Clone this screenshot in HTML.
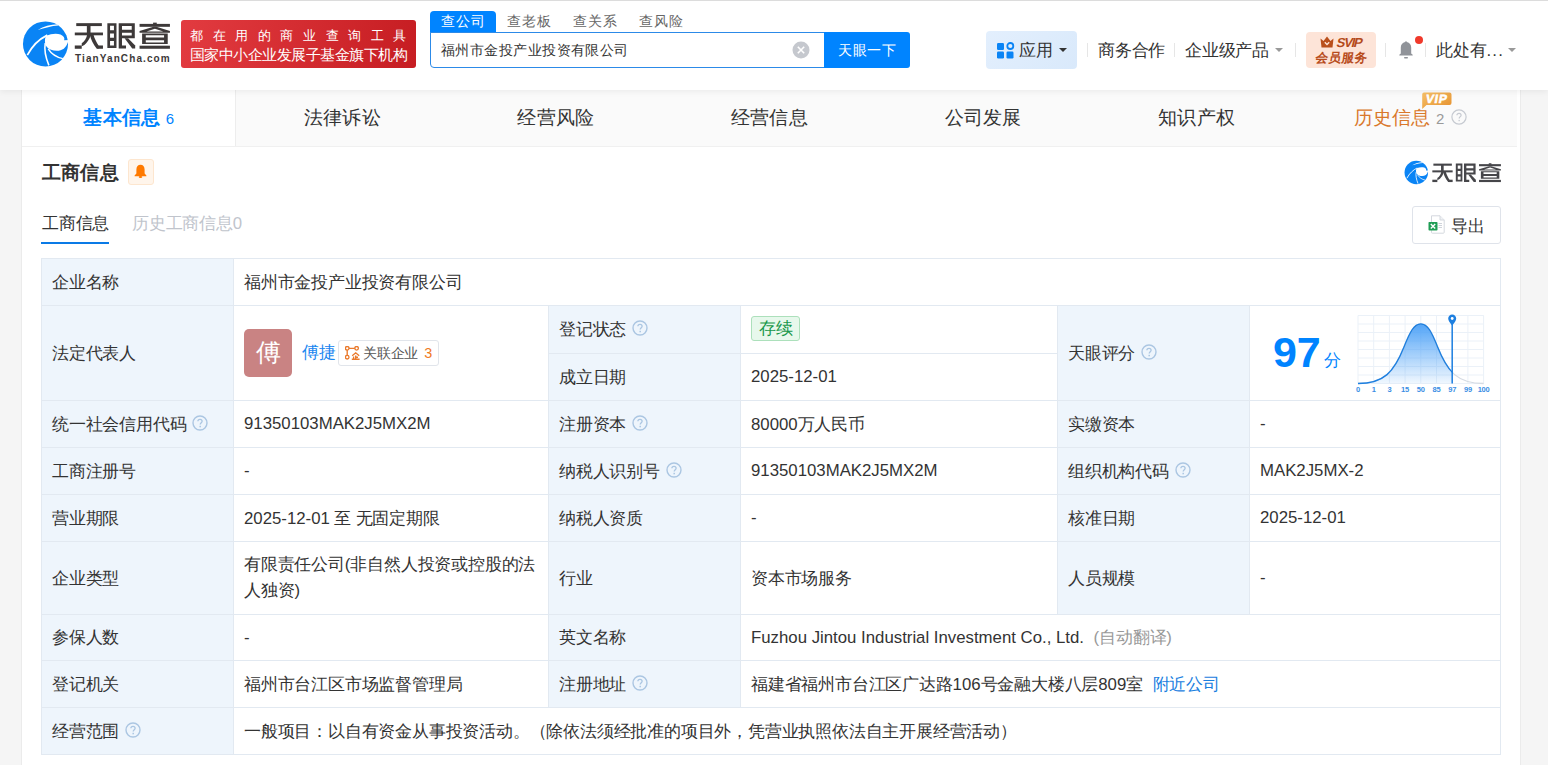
<!DOCTYPE html>
<html><head><meta charset="utf-8">
<style>
*{margin:0;padding:0;box-sizing:border-box;}
html,body{width:1548px;height:765px;overflow:hidden;background:#f5f5f5;font-family:"Liberation Sans",sans-serif;color:#333;}
.a{position:absolute;white-space:nowrap;}
#hdr{position:absolute;left:0;top:0;width:1548px;height:90px;background:#fff;box-shadow:0 2px 6px rgba(0,0,0,0.06);z-index:5;}
#card{position:absolute;left:21px;top:90px;width:1500px;height:700px;background:#fff;border:1px solid #ebebeb;border-top:none;}
.tab{position:absolute;top:90px;height:56px;font-size:19.2px;letter-spacing:0.2px;line-height:56px;text-align:center;color:#333;white-space:nowrap;}
.cell{position:absolute;border:1px solid #e2e9f1;background:#fff;display:flex;align-items:center;padding-left:10px;font-size:16.8px;color:#333;white-space:nowrap;letter-spacing:-0.2px;}
.l{letter-spacing:0;}
.cell.lab{background:#eef5fc;}
.tag{display:inline-block;position:relative;top:-1px;border:1px solid #ace0bb;background:#e7f8ec;color:#18974a;border-radius:3px;padding:0 6.5px 0 7px;line-height:23px;}
.lnk{color:#1a80e0;margin-left:9.5px;}
.wrap{white-space:normal;width:300px;line-height:26px;}
.q{display:inline-block;width:16px;height:16px;vertical-align:-1px;margin-left:6px;}
.sep{position:absolute;top:43px;width:1px;height:14px;background:#e6e6e6;}
.caret{position:absolute;width:0;height:0;border-left:4px solid transparent;border-right:4px solid transparent;border-top:4px solid #333;}
</style></head><body>

<div id="hdr">
  <div class="a" style="left:0;top:0;width:1548px;height:1px;background:#dcdcdc;"></div>
  <svg class="a" style="left:20px;top:18px" width="50" height="50" viewBox="0 0 765 765">
    <circle cx="390" cy="397" r="345" fill="#0a84f5"/>
    <path d="M272,182 C360,126 470,98 575,96 L585,114 C480,122 380,150 272,182 Z" fill="#fff"/>
    <path d="M405,272 C470,240 560,232 620,252 C668,272 688,305 676,340 L760,336 L760,350 L734,366 C708,455 645,502 565,502 C495,502 445,477 415,447 C388,417 378,372 382,332 C386,302 393,286 405,272 Z" fill="#fff"/>
    <path d="M418,262 C300,320 190,420 112,568" stroke="#fff" stroke-width="26" fill="none"/>
    <path d="M386,385 C370,480 390,600 442,725" stroke="#fff" stroke-width="24" fill="none"/>
    <path d="M432,472 C480,550 560,600 655,622" stroke="#fff" stroke-width="22" fill="none"/>
  </svg>
  <svg class="a" style="left:66px;top:14px" width="110" height="56" viewBox="0 0 1503 765" fill="#3d3939">
    <rect x="140" y="125" width="350" height="40"/>
    <rect x="120" y="253" width="385" height="38"/>
    <rect x="285" y="150" width="50" height="120"/>
    <path d="M290,280 L340,280 C320,360 260,430 215,440 L215,400 C250,380 280,330 290,280 Z"/>
    <path d="M325,280 L375,280 C390,340 420,390 445,432 L445,475 L420,475 C370,410 340,350 325,280 Z"/>
    <rect x="120" y="430" width="95" height="45"/>
    <rect x="430" y="430" width="75" height="45"/>
    <path fill-rule="evenodd" d="M565,125 H690 V465 H565 Z M602,162 H655 V222 H602 Z M602,265 H655 V325 H602 Z M602,370 H655 V430 H602 Z"/>
    <path fill-rule="evenodd" d="M720,125 H940 V330 H765 V430 H820 V472 H720 Z M765,165 H898 V215 H765 Z M765,255 H898 V292 H765 Z"/>
    <path d="M800,330 L848,330 L945,432 L945,472 L905,472 Z"/>
    <rect x="1005" y="135" width="415" height="40"/>
    <rect x="1190" y="118" width="50" height="30"/>
    <path d="M1195,175 L1235,175 L1420,232 L1420,255 L1005,255 L1005,232 Z M1215,200 L1100,238 L1330,238 Z" fill-rule="evenodd"/>
    <path fill-rule="evenodd" d="M1040,268 H1390 V410 H1040 Z M1090,290 H1340 V322 H1090 Z M1090,358 H1340 V388 H1090 Z"/>
    <rect x="1005" y="433" width="415" height="42"/>
  </svg>
  <div class="a" style="left:75px;top:53px;font-size:10px;font-weight:bold;color:#3d3939;letter-spacing:1.1px;">TianYanCha.com</div>
  <div class="a" style="left:181px;top:20px;width:235px;height:48px;border-radius:3px;background:linear-gradient(100deg,#e23b40,#c61d22);"></div>
  <div class="a" style="left:190px;top:26.5px;font-size:13px;color:#fff;letter-spacing:9.6px;font-weight:500;">都在用的商业查询工具</div>
  <div class="a" style="left:190px;top:46px;font-size:14.6px;letter-spacing:-0.53px;color:#fff;">国家中小企业发展子基金旗下机构</div>

  <div class="a" style="left:430px;top:11px;width:66px;height:22px;background:#0084ff;border-radius:4px 4px 0 0;"></div>
  <div class="a" style="left:441px;top:12.5px;font-size:13.6px;letter-spacing:0.8px;color:#fff;">查公司</div>
  <div class="a" style="left:507px;top:12.5px;font-size:13.6px;letter-spacing:0.8px;color:#666;">查老板</div>
  <div class="a" style="left:573px;top:12.5px;font-size:13.6px;letter-spacing:0.8px;color:#666;">查关系</div>
  <div class="a" style="left:639px;top:12.5px;font-size:13.6px;letter-spacing:0.8px;color:#666;">查风险</div>
  <div class="a" style="left:430px;top:32px;width:396px;height:36px;border:1px solid #2c8ae8;border-radius:0 0 0 4px;background:#fff;"></div>
  <div class="a" style="left:441px;top:42px;font-size:13.6px;letter-spacing:0.45px;color:#333;">福州市金投产业投资有限公司</div>
  <svg class="a" style="left:792px;top:41px" width="18" height="18" viewBox="0 0 18 18"><circle cx="9" cy="9" r="8.5" fill="#c5c8ce"/><path d="M5.8 5.8L12.2 12.2M12.2 5.8L5.8 12.2" stroke="#fff" stroke-width="1.6"/></svg>
  <div class="a" style="left:824px;top:32px;width:86px;height:36px;background:#0084ff;border-radius:0 3px 3px 0;color:#fff;font-size:14.4px;letter-spacing:0.4px;text-indent:0.4px;line-height:36px;text-align:center;">天眼一下</div>

  <div class="a" style="left:986px;top:31px;width:91px;height:38px;background:linear-gradient(135deg,#e3effd,#d9e9fb);border-radius:4px;"></div>
  <svg class="a" style="left:997px;top:42px" width="18" height="17" viewBox="0 0 18 17">
    <rect x="0" y="1" width="7" height="7" rx="1.2" fill="#0a84f5"/>
    <circle cx="13.3" cy="4" r="3" fill="none" stroke="#0a84f5" stroke-width="1.8"/>
    <rect x="0" y="9.5" width="7" height="7" rx="1.2" fill="#0a84f5"/>
    <rect x="9.5" y="9.5" width="7" height="7" rx="1.2" fill="#0a84f5"/>
  </svg>
  <div class="a" style="left:1019px;top:39px;font-size:16.8px;letter-spacing:-0.2px;color:#333;">应用</div>
  <div class="caret" style="left:1059px;top:48px;"></div>
  <div class="sep" style="left:1087px;"></div>
  <div class="a" style="left:1098px;top:39px;font-size:16.8px;letter-spacing:-0.2px;color:#333;">商务合作</div>
  <div class="sep" style="left:1174px;"></div>
  <div class="a" style="left:1185px;top:39px;font-size:16.8px;letter-spacing:-0.2px;color:#333;">企业级产品</div>
  <div class="caret" style="left:1275px;top:48px;border-top-color:#999;"></div>
  <div class="sep" style="left:1295px;"></div>
  <div class="a" style="left:1306px;top:32px;width:70px;height:36px;background:#fde4d8;border-radius:4px;"></div>
  <svg class="a" style="left:1320px;top:36px" width="14" height="12" viewBox="0 0 14 12"><path d="M0.5 2.5L3.5 5L7 0.5L10.5 5L13.5 2.5L12.5 11.5H1.5Z" fill="#b94f1c"/><path d="M4.8 6.3L7 8.6L9.2 6.3" stroke="#fde4d8" stroke-width="1.4" fill="none"/></svg>
  <div class="a" style="left:1334.5px;top:34.5px;font-size:13px;font-weight:bold;color:#b44a1b;letter-spacing:-1.2px;transform:skewX(-14deg);transform-origin:0 100%;">SVIP</div>
  <div class="a" style="left:1313.5px;top:50px;font-size:12.6px;font-weight:bold;color:#b84c1c;letter-spacing:0px;transform:skewX(-8deg);transform-origin:0 100%;">会员服务</div>
  <div class="sep" style="left:1385px;"></div>
  <svg class="a" style="left:1397px;top:40px" width="18" height="20" viewBox="0 0 18 20"><path d="M9 1.2C9.6 1.2 9.9 1.6 9.9 2.1C12.6 2.6 14.2 4.8 14.2 7.5V13.5L15.7 14.8V15.6H2.3V14.8L3.8 13.5V7.5C3.8 4.8 5.4 2.6 8.1 2.1C8.1 1.6 8.4 1.2 9 1.2Z" fill="#909399"/><rect x="7" y="17" width="4" height="1.6" rx="0.8" fill="#909399"/></svg>
  <div class="a" style="left:1415px;top:35.5px;width:8px;height:8px;border-radius:50%;background:#f0392b;"></div>
  <div class="sep" style="left:1425px;"></div>
  <div class="a" style="left:1436px;top:39px;font-size:16.8px;letter-spacing:-0.2px;color:#333;">此处有<span style="letter-spacing:1.2px">...</span></div>
  <div class="caret" style="left:1508px;top:48px;border-top-color:#999;"></div>
</div>


<div id="card"></div>
<div class="a" style="left:22px;top:90px;width:1495px;height:57px;background:#fafafa;border-bottom:1px solid #f0f0f0;"></div>
<div class="a" style="left:22px;top:90px;width:214px;height:56px;background:#fff;border-right:1px solid #ededed;"></div>
<div class="tab" style="left:22px;width:213.6px;color:#0084ff;font-weight:bold;">基本信息 <span style="font-weight:normal;font-size:15px;">6</span></div>
<div class="tab" style="left:235.6px;width:213.6px;">法律诉讼</div>
<div class="tab" style="left:449.1px;width:213.6px;">经营风险</div>
<div class="tab" style="left:662.7px;width:213.6px;">经营信息</div>
<div class="tab" style="left:876.3px;width:213.6px;">公司发展</div>
<div class="tab" style="left:1089.9px;width:213.6px;">知识产权</div>
<div class="tab" style="left:1303.4px;width:213.6px;color:#d9782b;">历史信息 <span style="color:#999;font-size:15px;">2</span><svg class="q" style="margin-left:6px;vertical-align:-1px;" viewBox="0 0 16 16"><circle cx="8" cy="8" r="7.1" fill="none" stroke="#c6cad1" stroke-width="1.2"/><path d="M5.9 6.3C5.9 5.1 6.8 4.3 8 4.3C9.2 4.3 10.1 5.1 10.1 6.2C10.1 7.6 8.2 7.8 8.2 9.5" fill="none" stroke="#c6cad1" stroke-width="1.2"/><rect x="7.5" y="10.9" width="1.3" height="1.3" fill="#c6cad1"/></svg></div>
<svg class="a" style="left:1421px;top:92px" width="31" height="18" viewBox="0 0 31 18"><defs><linearGradient id="vg" x1="0" y1="0" x2="1" y2="1"><stop offset="0" stop-color="#f6c067"/><stop offset="1" stop-color="#e58f2c"/></linearGradient></defs><path d="M3 0.5H28.5Q30.5 0.5 30.5 2.5V11Q30.5 13 28.5 13H5.5L1.2 17L1.2 2.5Q1.2 0.5 3 0.5Z" fill="url(#vg)"/><text x="15.5" y="10.6" font-family="Liberation Sans" font-weight="bold" font-size="12" letter-spacing="0.8" fill="#fff" stroke="#fff" stroke-width="0.6" text-anchor="middle" transform="skewX(-10) translate(1.5,0)">VIP</text></svg>
<div class="a" style="left:42px;top:160px;font-size:19.2px;letter-spacing:0.2px;font-weight:bold;color:#333;">工商信息</div>
<div class="a" style="left:128px;top:159px;width:26px;height:26px;background:#fff5eb;border:1px solid #fde6cf;border-radius:3px;"></div>
<svg class="a" style="left:134px;top:164px" width="13" height="14" viewBox="0 0 13 14"><path d="M6.5 0.8C9 0.8 10.6 2.8 10.6 5.4V9.6L12.4 11.6V12.3H0.6V11.6L2.4 9.6V5.4C2.4 2.8 4 0.8 6.5 0.8Z" fill="#ff7a00"/><ellipse cx="6.5" cy="13" rx="1.8" ry="1" fill="#ff7a00"/></svg>
<div class="a" style="left:42px;top:212px;font-size:16.8px;letter-spacing:-0.2px;color:#333;">工商信息</div>
<div class="a" style="left:41px;top:242px;width:68px;height:2px;background:#0a7ae6;"></div>
<div class="a" style="left:132px;top:212px;font-size:16.8px;letter-spacing:-0.2px;color:#c0c4cc;">历史工商信息0</div>
<div class="a" style="left:1412px;top:206px;width:89px;height:38px;border:1px solid #dfe3ea;border-radius:3px;background:#fff;"></div>
<div class="a" style="left:1451px;top:215px;font-size:16.8px;letter-spacing:-0.2px;color:#333;">导出</div>
<svg class="a" style="left:1427px;top:215px" width="19" height="19" viewBox="0 0 19 19"><path d="M4.5 0.8H13L17.2 5V17.4Q17.2 18.2 16.4 18.2H5.3Q4.5 18.2 4.5 17.4Z" fill="#fff" stroke="#d4d8de" stroke-width="1"/><path d="M13 0.8V5H17.2" fill="#f0f2f5" stroke="#d4d8de" stroke-width="1"/><path d="M11.5 8.5H15M11.5 10.5H15M11.5 12.5H15" stroke="#c9ced6" stroke-width="0.9"/><rect x="1.5" y="7" width="9" height="8.5" rx="0.8" fill="#1f9d55"/><path d="M3.8 9L8.2 13.5M8.2 9L3.8 13.5" stroke="#fff" stroke-width="1.4"/></svg>
  <svg class="a" style="left:1403.32px;top:158.68px" width="26.05" height="26.05" viewBox="0 0 765 765">
    <circle cx="390" cy="397" r="345" fill="#0a84f5"/>
    <path d="M272,182 C360,126 470,98 575,96 L585,114 C480,122 380,150 272,182 Z" fill="#fff"/>
    <path d="M405,272 C470,240 560,232 620,252 C668,272 688,305 676,340 L760,336 L760,350 L734,366 C708,455 645,502 565,502 C495,502 445,477 415,447 C388,417 378,372 382,332 C386,302 393,286 405,272 Z" fill="#fff"/>
    <path d="M418,262 C300,320 190,420 112,568" stroke="#fff" stroke-width="26" fill="none"/>
    <path d="M386,385 C370,480 390,600 442,725" stroke="#fff" stroke-width="24" fill="none"/>
    <path d="M432,472 C480,550 560,600 655,622" stroke="#fff" stroke-width="22" fill="none"/>
  </svg>
  <svg class="a" style="left:1425.7px;top:157.4px" width="79.3" height="40.4" viewBox="0 0 1503 765" fill="#46464a">
    <rect x="140" y="125" width="350" height="40"/>
    <rect x="120" y="253" width="385" height="38"/>
    <rect x="285" y="150" width="50" height="120"/>
    <path d="M290,280 L340,280 C320,360 260,430 215,440 L215,400 C250,380 280,330 290,280 Z"/>
    <path d="M325,280 L375,280 C390,340 420,390 445,432 L445,475 L420,475 C370,410 340,350 325,280 Z"/>
    <rect x="120" y="430" width="95" height="45"/>
    <rect x="430" y="430" width="75" height="45"/>
    <path fill-rule="evenodd" d="M565,125 H690 V465 H565 Z M602,162 H655 V222 H602 Z M602,265 H655 V325 H602 Z M602,370 H655 V430 H602 Z"/>
    <path fill-rule="evenodd" d="M720,125 H940 V330 H765 V430 H820 V472 H720 Z M765,165 H898 V215 H765 Z M765,255 H898 V292 H765 Z"/>
    <path d="M800,330 L848,330 L945,432 L945,472 L905,472 Z"/>
    <rect x="1005" y="135" width="415" height="40"/>
    <rect x="1190" y="118" width="50" height="30"/>
    <path d="M1195,175 L1235,175 L1420,232 L1420,255 L1005,255 L1005,232 Z M1215,200 L1100,238 L1330,238 Z" fill-rule="evenodd"/>
    <path fill-rule="evenodd" d="M1040,268 H1390 V410 H1040 Z M1090,290 H1340 V322 H1090 Z M1090,358 H1340 V388 H1090 Z"/>
    <rect x="1005" y="433" width="415" height="42"/>
  </svg>


<div class="cell lab" style="left:41px;top:258px;width:193px;height:48px;"><div>企业名称</div></div>
<div class="cell" style="left:233px;top:258px;width:1268px;height:48px;"><div>福州市金投产业投资有限公司</div></div>
<div class="cell lab" style="left:41px;top:305px;width:193px;height:96px;"><div>法定代表人</div></div>
<div class="cell" style="left:233px;top:305px;width:316px;height:96px;"><div style="position:absolute;left:10px;top:23px;width:48px;height:48px;border-radius:5px;background:#c98383;color:#fff;font-size:25px;line-height:46px;text-align:center;">傅</div>
<div style="position:absolute;left:68px;top:35px;font-size:16.8px;color:#1a86f0;">傅捷</div>
<div style="position:absolute;left:104px;top:34px;width:101px;height:26px;border:1px solid #e1e5eb;border-radius:3px;"></div>
<svg style="position:absolute;left:111px;top:40px" width="15" height="14" viewBox="0 0 15 14"><g fill="none" stroke="#ea7a2c" stroke-width="1.35"><circle cx="2.2" cy="2.3" r="1.8"/><circle cx="11.6" cy="2.3" r="1.8"/><circle cx="2.2" cy="11.2" r="1.8"/><path d="M4 2.3H9.8M2.2 4.1V9.4"/><path d="M6.8 13.2H14.6M10.7 9.6V13.2M10.7 11.2H13M8.6 10.6V13.2M7.2 9.8L10.7 6.8L14.2 9.8"/></g></svg>
<div style="position:absolute;left:129px;top:38px;font-size:14.4px;color:#555;">关联企业<span style="color:#f07a1f;margin-left:6px">3</span></div>
</div>
<div class="cell lab" style="left:548px;top:305px;width:193px;height:49px;"><div>登记状态<svg class="q" viewBox="0 0 16 16"><circle cx="8" cy="8" r="7" fill="none" stroke="#abc6e2" stroke-width="1.4"/><path d="M5.9 6.3C5.9 5.1 6.8 4.3 8 4.3C9.2 4.3 10.1 5.1 10.1 6.2C10.1 7.6 8.2 7.8 8.2 9.5" fill="none" stroke="#abc6e2" stroke-width="1.3"/><rect x="7.45" y="10.8" width="1.5" height="1.5" fill="#abc6e2"/></svg></div></div>
<div class="cell" style="left:740px;top:305px;width:318px;height:49px;"><div><span class="tag">存续</span></div></div>
<div class="cell lab" style="left:548px;top:353px;width:193px;height:48px;"><div>成立日期</div></div>
<div class="cell" style="left:740px;top:353px;width:318px;height:48px;"><div><span class="l">2025-12-01</span></div></div>
<div class="cell lab" style="left:1057px;top:305px;width:193px;height:96px;"><div>天眼评分<svg class="q" viewBox="0 0 16 16"><circle cx="8" cy="8" r="7" fill="none" stroke="#abc6e2" stroke-width="1.4"/><path d="M5.9 6.3C5.9 5.1 6.8 4.3 8 4.3C9.2 4.3 10.1 5.1 10.1 6.2C10.1 7.6 8.2 7.8 8.2 9.5" fill="none" stroke="#abc6e2" stroke-width="1.3"/><rect x="7.45" y="10.8" width="1.5" height="1.5" fill="#abc6e2"/></svg></div></div>
<div class="cell" style="left:1249px;top:305px;width:252px;height:96px;"><div style="position:absolute;left:23px;top:22px;font-size:43px;font-weight:bold;color:#0084ff;line-height:48px;">97</div>
<div style="position:absolute;left:73.5px;top:43px;font-size:17px;color:#0084ff;">分</div>
<svg style="position:absolute;left:104px;top:5.5px" width="140" height="88" viewBox="0 0 140 88">
 <defs><linearGradient id="gf" x1="0" y1="0" x2="0" y2="1"><stop offset="0" stop-color="#4aa0f7" stop-opacity="0.95"/><stop offset="1" stop-color="#4aa0f7" stop-opacity="0.08"/></linearGradient>
 <clipPath id="cl"><rect x="0" y="0" width="99" height="88"/></clipPath></defs>
 <g stroke="#ebf1f8" stroke-width="1" fill="none">
  <path d="M4 3.5H129.7M4 12H129.7M4 20.5H129.7M4 29H129.7M4 37.5H129.7M4 46H129.7M4 54.5H129.7M4 63H129.7M4 71.5H129.7"/>
  <path d="M4 3.5V71.5M19.7 3.5V71.5M35.4 3.5V71.5M51.1 3.5V71.5M66.8 3.5V71.5M82.5 3.5V71.5M98.2 3.5V71.5M113.9 3.5V71.5M129.6 3.5V71.5"/>
 </g>
 <path id="bell" d="M4 71.5C30 71.5 40 60 50 35C56 20 60 12 66.8 12C73.6 12 77.6 20 83.6 35C93.6 60 103.6 71.5 129.6 71.5" fill="none"/>
 <path d="M4 71.5C30 71.5 40 60 50 35C56 20 60 12 66.8 12C73.6 12 77.6 20 83.6 35C93.6 60 103.6 71.5 129.6 71.5Z" fill="url(#gf)" clip-path="url(#cl)"/>
 <path d="M4 71.5C30 71.5 40 60 50 35C56 20 60 12 66.8 12C73.6 12 77.6 20 83.6 35C93.6 60 103.6 71.5 129.6 71.5" fill="none" stroke="#d5dbe3" stroke-width="1.3"/>
 <path d="M4 71.5C30 71.5 40 60 50 35C56 20 60 12 66.8 12C73.6 12 77.6 20 83.6 35C93.6 60 103.6 71.5 129.6 71.5" fill="none" stroke="#1d7fe0" stroke-width="1.4" clip-path="url(#cl)"/>
 <path d="M98.2 12V71.5" stroke="#1d7fe0" stroke-width="1.5"/>
 <path d="M98.2 13.5C95.8 10.5 94.2 8.6 94.2 6.5C94.2 4.2 96 2.5 98.2 2.5C100.4 2.5 102.2 4.2 102.2 6.5C102.2 8.6 100.6 10.5 98.2 13.5Z" fill="#1d7fe0"/>
 <circle cx="98.2" cy="6.5" r="1.4" fill="#fff"/>
 <g font-family="Liberation Sans" font-size="7.5" font-weight="bold" fill="#3b8ee4" text-anchor="middle">
  <text x="4" y="79.8">0</text><text x="19.7" y="79.8">1</text><text x="35.4" y="79.8">3</text><text x="51.1" y="79.8">15</text><text x="66.8" y="79.8">50</text><text x="82.5" y="79.8">85</text><text x="98.2" y="79.8">97</text><text x="113.9" y="79.8">99</text><text x="129.6" y="79.8">100</text>
 </g>
</svg>
</div>
<div class="cell lab" style="left:41px;top:400px;width:193px;height:48px;"><div>统一社会信用代码<svg class="q" viewBox="0 0 16 16"><circle cx="8" cy="8" r="7" fill="none" stroke="#abc6e2" stroke-width="1.4"/><path d="M5.9 6.3C5.9 5.1 6.8 4.3 8 4.3C9.2 4.3 10.1 5.1 10.1 6.2C10.1 7.6 8.2 7.8 8.2 9.5" fill="none" stroke="#abc6e2" stroke-width="1.3"/><rect x="7.45" y="10.8" width="1.5" height="1.5" fill="#abc6e2"/></svg></div></div>
<div class="cell" style="left:233px;top:400px;width:316px;height:48px;"><div><span class="l">91350103MAK2J5MX2M</span></div></div>
<div class="cell lab" style="left:548px;top:400px;width:193px;height:48px;"><div>注册资本<svg class="q" viewBox="0 0 16 16"><circle cx="8" cy="8" r="7" fill="none" stroke="#abc6e2" stroke-width="1.4"/><path d="M5.9 6.3C5.9 5.1 6.8 4.3 8 4.3C9.2 4.3 10.1 5.1 10.1 6.2C10.1 7.6 8.2 7.8 8.2 9.5" fill="none" stroke="#abc6e2" stroke-width="1.3"/><rect x="7.45" y="10.8" width="1.5" height="1.5" fill="#abc6e2"/></svg></div></div>
<div class="cell" style="left:740px;top:400px;width:318px;height:48px;"><div><span class="l">80000</span>万人民币</div></div>
<div class="cell lab" style="left:1057px;top:400px;width:193px;height:48px;"><div>实缴资本</div></div>
<div class="cell" style="left:1249px;top:400px;width:252px;height:48px;"><div><span class="l">-</span></div></div>
<div class="cell lab" style="left:41px;top:447px;width:193px;height:48px;"><div>工商注册号</div></div>
<div class="cell" style="left:233px;top:447px;width:316px;height:48px;"><div><span class="l">-</span></div></div>
<div class="cell lab" style="left:548px;top:447px;width:193px;height:48px;"><div>纳税人识别号<svg class="q" viewBox="0 0 16 16"><circle cx="8" cy="8" r="7" fill="none" stroke="#abc6e2" stroke-width="1.4"/><path d="M5.9 6.3C5.9 5.1 6.8 4.3 8 4.3C9.2 4.3 10.1 5.1 10.1 6.2C10.1 7.6 8.2 7.8 8.2 9.5" fill="none" stroke="#abc6e2" stroke-width="1.3"/><rect x="7.45" y="10.8" width="1.5" height="1.5" fill="#abc6e2"/></svg></div></div>
<div class="cell" style="left:740px;top:447px;width:318px;height:48px;"><div><span class="l">91350103MAK2J5MX2M</span></div></div>
<div class="cell lab" style="left:1057px;top:447px;width:193px;height:48px;"><div>组织机构代码<svg class="q" viewBox="0 0 16 16"><circle cx="8" cy="8" r="7" fill="none" stroke="#abc6e2" stroke-width="1.4"/><path d="M5.9 6.3C5.9 5.1 6.8 4.3 8 4.3C9.2 4.3 10.1 5.1 10.1 6.2C10.1 7.6 8.2 7.8 8.2 9.5" fill="none" stroke="#abc6e2" stroke-width="1.3"/><rect x="7.45" y="10.8" width="1.5" height="1.5" fill="#abc6e2"/></svg></div></div>
<div class="cell" style="left:1249px;top:447px;width:252px;height:48px;"><div><span class="l">MAK2J5MX-2</span></div></div>
<div class="cell lab" style="left:41px;top:494px;width:193px;height:48px;"><div>营业期限</div></div>
<div class="cell" style="left:233px;top:494px;width:316px;height:48px;"><div><span class="l">2025-12-01</span> 至 无固定期限</div></div>
<div class="cell lab" style="left:548px;top:494px;width:193px;height:48px;"><div>纳税人资质</div></div>
<div class="cell" style="left:740px;top:494px;width:318px;height:48px;"><div><span class="l">-</span></div></div>
<div class="cell lab" style="left:1057px;top:494px;width:193px;height:48px;"><div>核准日期</div></div>
<div class="cell" style="left:1249px;top:494px;width:252px;height:48px;"><div><span class="l">2025-12-01</span></div></div>
<div class="cell lab" style="left:41px;top:541px;width:193px;height:74px;"><div>企业类型</div></div>
<div class="cell" style="left:233px;top:541px;width:316px;height:74px;"><div><div class="wrap">有限责任公司<span class="l">(</span>非自然人投资或控股的法人独资<span class="l">)</span></div></div></div>
<div class="cell lab" style="left:548px;top:541px;width:193px;height:74px;"><div>行业</div></div>
<div class="cell" style="left:740px;top:541px;width:318px;height:74px;"><div>资本市场服务</div></div>
<div class="cell lab" style="left:1057px;top:541px;width:193px;height:74px;"><div>人员规模</div></div>
<div class="cell" style="left:1249px;top:541px;width:252px;height:74px;"><div><span class="l">-</span></div></div>
<div class="cell lab" style="left:41px;top:614px;width:193px;height:47px;"><div>参保人数</div></div>
<div class="cell" style="left:233px;top:614px;width:316px;height:47px;"><div><span class="l">-</span></div></div>
<div class="cell lab" style="left:548px;top:614px;width:193px;height:47px;"><div>英文名称</div></div>
<div class="cell" style="left:740px;top:614px;width:761px;height:47px;"><div><span class="l">Fuzhou Jintou Industrial Investment Co., Ltd.</span><span style="color:#999;margin-left:9.5px"><span class="l">(</span>自动翻译<span class="l">)</span></span></div></div>
<div class="cell lab" style="left:41px;top:660px;width:193px;height:48px;"><div>登记机关</div></div>
<div class="cell" style="left:233px;top:660px;width:316px;height:48px;"><div>福州市台江区市场监督管理局</div></div>
<div class="cell lab" style="left:548px;top:660px;width:193px;height:48px;"><div>注册地址<svg class="q" viewBox="0 0 16 16"><circle cx="8" cy="8" r="7" fill="none" stroke="#abc6e2" stroke-width="1.4"/><path d="M5.9 6.3C5.9 5.1 6.8 4.3 8 4.3C9.2 4.3 10.1 5.1 10.1 6.2C10.1 7.6 8.2 7.8 8.2 9.5" fill="none" stroke="#abc6e2" stroke-width="1.3"/><rect x="7.45" y="10.8" width="1.5" height="1.5" fill="#abc6e2"/></svg></div></div>
<div class="cell" style="left:740px;top:660px;width:761px;height:48px;"><div>福建省福州市台江区广达路<span class="l">106</span>号金融大楼八层<span class="l">809</span>室<span class="lnk">附近公司</span></div></div>
<div class="cell lab" style="left:41px;top:707px;width:193px;height:48px;"><div>经营范围<svg class="q" viewBox="0 0 16 16"><circle cx="8" cy="8" r="7" fill="none" stroke="#abc6e2" stroke-width="1.4"/><path d="M5.9 6.3C5.9 5.1 6.8 4.3 8 4.3C9.2 4.3 10.1 5.1 10.1 6.2C10.1 7.6 8.2 7.8 8.2 9.5" fill="none" stroke="#abc6e2" stroke-width="1.3"/><rect x="7.45" y="10.8" width="1.5" height="1.5" fill="#abc6e2"/></svg></div></div>
<div class="cell" style="left:233px;top:707px;width:1268px;height:48px;"><div>一般项目：以自有资金从事投资活动。（除依法须经批准的项目外，凭营业执照依法自主开展经营活动）</div></div>
</body></html>
